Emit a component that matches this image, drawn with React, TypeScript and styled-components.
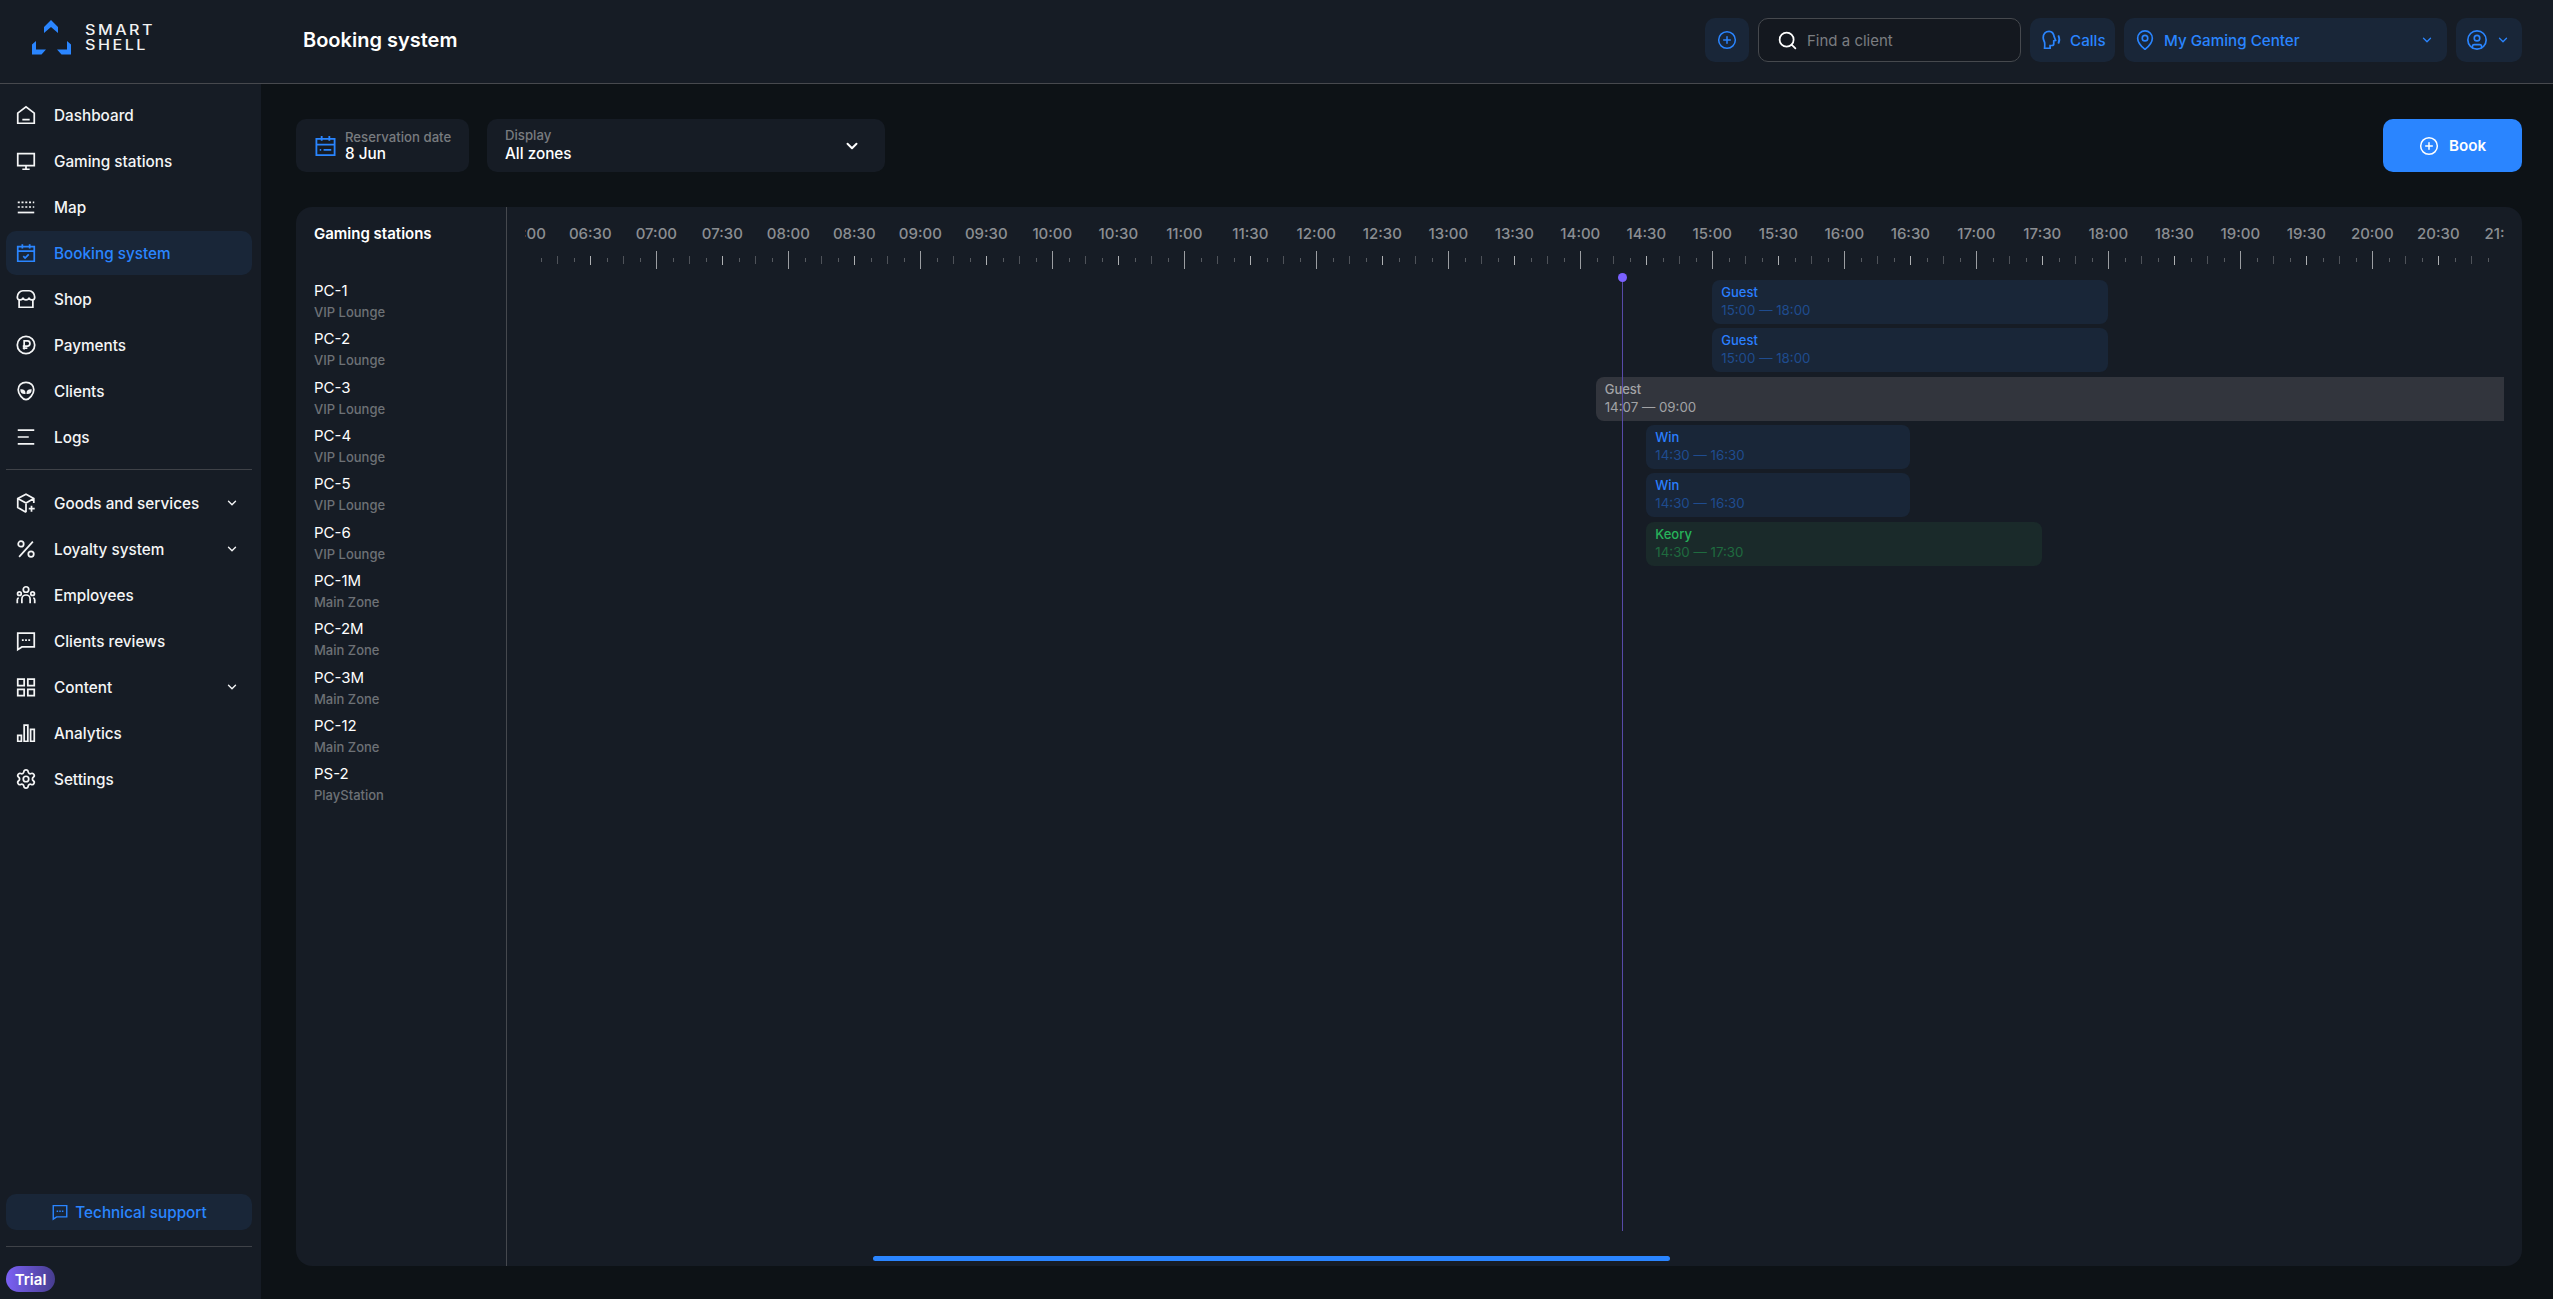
import React from 'react';
import styled, { createGlobalStyle } from 'styled-components';
import { ChevronDown, CirclePlus, CircleUser, MapPin, Search, Settings } from 'lucide-react';

const BLUE = '#2a85ff';
const HOUR_WIDTH = 132;
const FIRST_HOUR = 6;
const ORIGIN = -0.7;

const GlobalStyle = createGlobalStyle`
  html, body {
    margin: 0;
    padding: 0;
    background: #0d1216;
    overflow: hidden;
  }
  * {
    box-sizing: border-box;
  }
  body {
    font-family: Inter, "Noto Sans", sans-serif;
    color: #fff;
  }
`;

const Shell = styled.div`
  display: flex;
  flex-direction: column;
  width: 2553px;
  height: 1299px;
`;

const Header = styled.header`
  display: flex;
  align-items: center;
  flex: none;
  height: 84px;
  padding: 0 31px 3px 0;
  background: #161c25;
  border-bottom: 1px solid #47494e;
`;

const Logo = styled.div`
  display: flex;
  align-items: center;
  gap: 14px;
  width: 303px;
  padding: 0 0 6px 32px;
`;

const LogoText = styled.div`
  font-size: 14px;
  line-height: 15px;
  font-weight: 500;
  letter-spacing: 2.2px;
  color: #f2f2f2;
  transform: scaleX(1.15);
  transform-origin: left center;
`;

const PageTitle = styled.h1`
  flex: 1;
  margin: 0;
  font-size: 20px;
  font-weight: 600;
`;

const HeaderControls = styled.div`
  display: flex;
  gap: 9px;
`;

const SoftButton = styled.div<{ $width: number }>`
  display: flex;
  align-items: center;
  gap: 8px;
  width: ${(p) => p.$width}px;
  height: 44px;
  padding: 0 10px;
  border-radius: 10px;
  background: #192638;
  color: ${BLUE};
  font-size: 15.2px;
  font-weight: 500;
`;

const IconButton = styled(SoftButton)`
  justify-content: center;
  padding: 0;
`;

const Spacer = styled.span`
  flex: 1;
`;

const PinnedChevron = styled(ChevronDown)`
  margin-right: 3px;
`;

const SearchBox = styled.div`
  display: flex;
  align-items: center;
  gap: 9px;
  width: 263px;
  height: 44px;
  padding: 0 18px;
  border: 1px solid #46494e;
  border-radius: 10px;
  background: #14181f;
  color: #7b7d81;
  font-size: 15px;
`;

const Body = styled.div`
  display: flex;
  flex: 1;
  min-height: 0;
`;

const Sidebar = styled.aside`
  display: flex;
  flex-direction: column;
  flex: none;
  width: 261px;
  padding: 9px 9px 7px 6px;
  background: #161c25;
`;

const NavList = styled.nav`
  display: flex;
  flex-direction: column;
  gap: 2px;
`;

const NavItem = styled.a<{ $active?: boolean }>`
  display: flex;
  align-items: center;
  height: 44px;
  padding: 0 10px 0 9px;
  gap: 17px;
  border-radius: 10px;
  font-size: 15.3px;
  font-weight: 500;
  color: ${(p) => (p.$active ? BLUE : '#f4f5f6')};
  background: ${(p) => (p.$active ? '#192638' : 'transparent')};
`;

const NavDivider = styled.div`
  height: 1px;
  margin: 10px 0 11px;
  background: #3f4248;
`;

const FooterDivider = styled.div`
  height: 1px;
  margin-top: 16px;
  background: #3f4248;
`;

const SupportButton = styled.div`
  display: flex;
  align-items: center;
  justify-content: center;
  gap: 6px;
  height: 36px;
  margin-top: auto;
  border-radius: 10px;
  background: #192638;
  color: ${BLUE};
  font-size: 15.3px;
  font-weight: 500;
`;

const TrialBadge = styled.div`
  display: flex;
  align-items: center;
  justify-content: center;
  width: 49px;
  height: 26px;
  margin-top: 19px;
  border-radius: 13px;
  background: linear-gradient(90deg, #7b61f5, #473d8f);
  font-size: 15px;
  font-weight: 600;
`;

const Main = styled.main`
  display: flex;
  flex-direction: column;
  flex: 1;
  min-width: 0;
  padding: 35px 31px 33px 35px;
`;

const Toolbar = styled.div`
  display: flex;
  gap: 18px;
  flex: none;
  height: 53px;
  margin-bottom: 35px;
`;

const DateField = styled.div`
  display: flex;
  align-items: center;
  gap: 8px;
  width: 173px;
  padding-left: 18px;
  border-radius: 10px;
  background: #161c25;
`;

const SelectField = styled.div`
  display: flex;
  align-items: center;
  justify-content: space-between;
  width: 398px;
  padding: 0 24px 0 18px;
  border-radius: 10px;
  background: #161c25;
`;

const FieldLabel = styled.div`
  font-size: 13.2px;
  line-height: 15px;
  font-weight: 500;
  color: #787b7f;
`;

const FieldValue = styled.div`
  font-size: 15.3px;
  line-height: 17px;
  font-weight: 500;
  color: #fff;
`;

const SelectValue = styled(FieldValue)`
  margin-top: 2px;
`;

const SelectText = styled.div`
  margin-top: -1px;
`;

const BookButton = styled.div`
  display: flex;
  align-items: center;
  justify-content: center;
  gap: 10px;
  width: 139px;
  margin-left: auto;
  border-radius: 10px;
  background: ${BLUE};
  font-size: 15.2px;
  font-weight: 600;
`;

const Panel = styled.section`
  position: relative;
  display: grid;
  grid-template-columns: 211px 1fr;
  flex: 1;
  min-height: 0;
  overflow: hidden;
  border-radius: 16px;
  background: #161c25;
`;

const StationsColumn = styled.div`
  padding: 0 18px;
  border-right: 1px solid #45484e;
`;

const StationsTitle = styled.div`
  height: 73px;
  padding-top: 18px;
  font-size: 15px;
  line-height: 18px;
  font-weight: 600;
`;

const StationRow = styled.div`
  height: 48.33px;
`;

const StationName = styled.div`
  font-size: 15px;
  line-height: 22px;
  font-weight: 400;
`;

const StationZone = styled.div`
  font-size: 13px;
  line-height: 20px;
  font-weight: 500;
  color: #6d7176;
`;

const TimeColumn = styled.div`
  padding: 0 18px;
  min-width: 0;
`;

const TimeClip = styled.div`
  position: relative;
  height: 100%;
  overflow: hidden;
`;

const LabelsRow = styled.div`
  display: flex;
  height: 36px;
  padding-top: 18px;
  margin-left: ${ORIGIN - HOUR_WIDTH / 4}px;
`;

const TimeLabel = styled.div`
  flex: none;
  width: ${HOUR_WIDTH / 2}px;
  font-size: 15px;
  line-height: 18px;
  font-weight: 500;
  text-align: center;
  color: #8b8e92;
`;

const Ruler = styled.div`
  display: flex;
  align-items: center;
  height: 18px;
  margin-top: 8px;
  margin-bottom: 9px;
  margin-left: ${ORIGIN}px;
`;

const TickCell = styled.div`
  display: flex;
  align-items: center;
  flex: none;
  width: ${HOUR_WIDTH / 8}px;
`;

const Tick = styled.div<{ $kind: 'hour' | 'half' | 'quarter' | 'minor' }>`
  width: 1px;
  height: ${(p) => ({ hour: 18, half: 9, quarter: 8, minor: 4 })[p.$kind]}px;
  background: ${(p) => ({ hour: '#9b9ea2', half: '#aeb0b3', quarter: '#4e5259', minor: '#565a60' })[p.$kind]};
`;

const BookingRow = styled.div`
  position: relative;
  height: 48.33px;
`;

const tones = {
  blue: { bg: '#192638', name: '#2a7fff', time: '#1f4c8f' },
  grey: { bg: '#32353d', name: '#a2a3a6', time: '#a2a3a6' },
  green: { bg: '#1a2a2a', name: '#27b35a', time: '#1f6b3f' },
};

type Tone = keyof typeof tones;

const BookingBar = styled.div<{ $tone: Tone }>`
  position: absolute;
  top: 2px;
  height: 44px;
  padding: 4px 9px;
  border-radius: 8px;
  background: ${(p) => tones[p.$tone].bg};
  white-space: nowrap;
`;

const BookingName = styled.div<{ $tone: Tone }>`
  font-size: 13px;
  line-height: 17px;
  font-weight: 500;
  color: ${(p) => tones[p.$tone].name};
`;

const BookingTime = styled.div<{ $tone: Tone }>`
  font-size: 13.3px;
  line-height: 19px;
  color: ${(p) => tones[p.$tone].time};
`;

const NowLine = styled.div`
  position: absolute;
  top: 70px;
  width: 1px;
  height: 954px;
  background: #574aa8;

  &::before {
    content: '';
    position: absolute;
    top: -4px;
    left: -4px;
    width: 9px;
    height: 9px;
    border-radius: 50%;
    background: #7b61ff;
  }
`;

const ScrollThumb = styled.div`
  position: absolute;
  left: 577px;
  bottom: 5px;
  width: 797px;
  height: 5px;
  border-radius: 3px;
  background: ${BLUE};
`;

const NavSvg = styled.svg<{ $size?: number; $color?: string }>`
  flex: none;
  width: ${(p) => p.$size ?? 22}px;
  height: ${(p) => p.$size ?? 22}px;
  fill: none;
  stroke: ${(p) => p.$color ?? 'currentColor'};
  stroke-width: 1.9;
`;

const GearIcon = styled(Settings)`
  flex: none;
`;

const Chevron = styled(ChevronDown)`
  flex: none;
  margin-left: auto;
  margin-right: 3px;
`;

const LogoMark = () => (
  <svg width="39" height="35" viewBox="32 19 39 35" fill={BLUE}>
    <path d="M44 26l7-7 7 7v6l-7-6-7 6z" />
    <path d="M32 43.5l4-3.5v8.5h10l-4.5 5H32z" />
    <path d="M71 43.5L67 40v8.5H57l4.5 5H71z" />
  </svg>
);

const icons: Record<string, React.ReactNode> = {
  dashboard: <path d="M3 10l9-7 9 7v11H3zM8 17h8" />,
  monitor: <path d="M3 4h18v13H3zM12 17v4M8 21h8" />,
  map: (
    <>
      <path d="M3 7h18M3 12h18" strokeDasharray="2.2 1.9" />
      <path d="M3 18h18" />
    </>
  ),
  booking: <path d="M3 5h18v16H3zM3 10h18M8 2.5V7M16 2.5V7M9 15.5l2 2 4-4" />,
  shop: (
    <path d="M2.5 10c0-4 3-7 6-7h7c3 0 6 3 6 7 0 2-1.5 3-3 3s-3-1-3.2-2.5C15 12 13.5 13 12 13s-3-1-3.3-2.5C8.5 12 7 13 5.5 13s-3-1-3-3zM4.5 13v8h15v-8" />
  ),
  payments: (
    <>
      <circle cx="12" cy="12" r="9.5" />
      <path d="M10 17V7.5h3.5a2.8 2.8 0 0 1 0 5.6H8.5M8.5 15.5h5" />
    </>
  ),
  clients: (
    <path d="M12 2.5c-5 0-8.5 3.5-8.5 8 0 5 5 11 8.5 11s8.5-6 8.5-11c0-4.5-3.5-8-8.5-8zM6.8 11c2.4 0 3.7 1.3 3.7 3.3-2.4 0-3.7-1.3-3.7-3.3zM17.2 11c-2.4 0-3.7 1.3-3.7 3.3 2.4 0 3.7-1.3 3.7-3.3z" />
  ),
  logs: <path d="M3 4.5h18M3 12h12M3 19.5h18" />,
  goods: <path d="M20.5 12V7L12 2.5 3 7v10l9 5M3 7l9 5 8.5-5M12 12v10M18 15v6.5M15 18.2h6.5" />,
  loyalty: (
    <>
      <circle cx="6.5" cy="6.5" r="3" />
      <circle cx="17.5" cy="17.5" r="3" />
      <path d="M19.5 4L4.5 20.5" />
    </>
  ),
  employees: (
    <>
      <circle cx="12" cy="6" r="3" />
      <circle cx="4.8" cy="10.5" r="2" />
      <circle cx="19.2" cy="10.5" r="2" />
      <path d="M7.5 21v-4.5a4.5 4.5 0 0 1 9 0V21M2.5 21v-3.5c0-1.2.5-2 1.5-2.5M21.5 21v-3.5c0-1.2-.5-2-1.5-2.5" />
    </>
  ),
  reviews: (
    <>
      <path d="M3 3.5h18v15H7.5L3 21.5z" />
      <path d="M7.5 11h9" strokeDasharray="2 1.5" />
    </>
  ),
  content: <path d="M3 3.5h7v7H3zM14 3.5h7v7h-7zM3 14.5h7v7H3zM14 14.5h7v7h-7z" />,
  analytics: <path d="M3 14.5h4V21H3zM10 3.5h4V21h-4zM17 8h4v13h-4z" />,
};

const NavIcon = ({ name }: { name: string }) =>
  name === 'settings' ? (
    <GearIcon size={22} strokeWidth={1.9} />
  ) : (
    <NavSvg viewBox="0 0 24 24">{icons[name]}</NavSvg>
  );

const primaryNav = [
  { icon: 'dashboard', label: 'Dashboard' },
  { icon: 'monitor', label: 'Gaming stations' },
  { icon: 'map', label: 'Map' },
  { icon: 'booking', label: 'Booking system', active: true },
  { icon: 'shop', label: 'Shop' },
  { icon: 'payments', label: 'Payments' },
  { icon: 'clients', label: 'Clients' },
  { icon: 'logs', label: 'Logs' },
];

const secondaryNav = [
  { icon: 'goods', label: 'Goods and services', more: true },
  { icon: 'loyalty', label: 'Loyalty system', more: true },
  { icon: 'employees', label: 'Employees' },
  { icon: 'reviews', label: 'Clients reviews' },
  { icon: 'content', label: 'Content', more: true },
  { icon: 'analytics', label: 'Analytics' },
  { icon: 'settings', label: 'Settings' },
];

const stations = [
  ['PC-1', 'VIP Lounge'],
  ['PC-2', 'VIP Lounge'],
  ['PC-3', 'VIP Lounge'],
  ['PC-4', 'VIP Lounge'],
  ['PC-5', 'VIP Lounge'],
  ['PC-6', 'VIP Lounge'],
  ['PC-1M', 'Main Zone'],
  ['PC-2M', 'Main Zone'],
  ['PC-3M', 'Main Zone'],
  ['PC-12', 'Main Zone'],
  ['PS-2', 'PlayStation'],
];

type Booking = { name: string; from: number; to: number; time: string; tone: Tone };

const bookings: Booking[] = [
  { name: 'Guest', from: 15, to: 18, time: '15:00 — 18:00', tone: 'blue' },
  { name: 'Guest', from: 15, to: 18, time: '15:00 — 18:00', tone: 'blue' },
  { name: 'Guest', from: 14 + 7 / 60, to: 33, time: '14:07 — 09:00', tone: 'grey' },
  { name: 'Win', from: 14.5, to: 16.5, time: '14:30 — 16:30', tone: 'blue' },
  { name: 'Win', from: 14.5, to: 16.5, time: '14:30 — 16:30', tone: 'blue' },
  { name: 'Keory', from: 14.5, to: 17.5, time: '14:30 — 17:30', tone: 'green' },
];

const hourToX = (hour: number) => ORIGIN + (hour - FIRST_HOUR) * HOUR_WIDTH;

const timeLabels = Array.from({ length: 32 }, (_, i) => {
  const hour = FIRST_HOUR + Math.floor(i / 2);
  return `${String(hour).padStart(2, '0')}:${i % 2 ? '30' : '00'}`;
});

const tickKind = (i: number) => {
  if (i % 8 === 0) return 'hour';
  if (i % 4 === 0) return 'half';
  return i % 2 === 0 ? 'quarter' : 'minor';
};

const App: React.FC = () => (
  <Shell>
    <GlobalStyle />
    <Header>
      <Logo>
        <LogoMark />
        <LogoText>
          SMART
          <br />
          SHELL
        </LogoText>
      </Logo>
      <PageTitle>Booking system</PageTitle>
      <HeaderControls>
        <IconButton $width={44}>
          <CirclePlus size={20} strokeWidth={1.8} />
        </IconButton>
        <SearchBox>
          <Search size={21} color="#fff" strokeWidth={2} />
          Find a client
        </SearchBox>
        <SoftButton $width={85}>
          <NavSvg $size={22} viewBox="0 0 24 24">
            <path d="M10 2.5C6 2.5 3.5 5.5 3.5 9.5c0 2 1 3.5 1.5 5 .4 1.5.2 4 0 6.5h6v-3h2c1.5 0 2-.8 2-2v-3l2-.5-1.5-4C15 5.5 13.5 2.5 10 2.5zM20 7c1.5 3 1.5 6 0 9" />
          </NavSvg>
          Calls
        </SoftButton>
        <SoftButton $width={323}>
          <MapPin size={22} strokeWidth={1.8} />
          My Gaming Center
          <Spacer />
          <PinnedChevron size={14} strokeWidth={2.2} />
        </SoftButton>
        <SoftButton $width={66}>
          <CircleUser size={22} strokeWidth={1.8} />
          <ChevronDown size={14} strokeWidth={2.2} />
        </SoftButton>
      </HeaderControls>
    </Header>
    <Body>
      <Sidebar>
        <NavList>
          {primaryNav.map((item) => (
            <NavItem key={item.label} $active={item.active}>
              <NavIcon name={item.icon} />
              {item.label}
            </NavItem>
          ))}
        </NavList>
        <NavDivider />
        <NavList>
          {secondaryNav.map((item) => (
            <NavItem key={item.label}>
              <NavIcon name={item.icon} />
              {item.label}
              {item.more && <Chevron size={14} strokeWidth={2.4} />}
            </NavItem>
          ))}
        </NavList>
        <SupportButton>
          <NavSvg $size={18} viewBox="0 0 24 24">
            {icons.reviews}
          </NavSvg>
          Technical support
        </SupportButton>
        <FooterDivider />
        <TrialBadge>Trial</TrialBadge>
      </Sidebar>
      <Main>
        <Toolbar>
          <DateField>
            <NavSvg $size={23} $color={BLUE} viewBox="0 0 24 24">
              <path d="M2.5 5h19v17h-19zM2.5 11h19M8 2v5M16 2v5M10 16.5h8M6 16.5h1.5" />
            </NavSvg>
            <div>
              <FieldLabel>Reservation date</FieldLabel>
              <FieldValue>8 Jun</FieldValue>
            </div>
          </DateField>
          <SelectField>
            <SelectText>
              <FieldLabel>Display</FieldLabel>
              <SelectValue>All zones</SelectValue>
            </SelectText>
            <ChevronDown size={18} strokeWidth={2.6} />
          </SelectField>
          <BookButton>
            <CirclePlus size={20} strokeWidth={1.8} />
            Book
          </BookButton>
        </Toolbar>
        <Panel>
          <StationsColumn>
            <StationsTitle>Gaming stations</StationsTitle>
            {stations.map(([name, zone]) => (
              <StationRow key={name}>
                <StationName>{name}</StationName>
                <StationZone>{zone}</StationZone>
              </StationRow>
            ))}
          </StationsColumn>
          <TimeColumn>
            <TimeClip>
              <LabelsRow>
                {timeLabels.map((label) => (
                  <TimeLabel key={label}>{label}</TimeLabel>
                ))}
              </LabelsRow>
              <Ruler>
                {Array.from({ length: 124 }, (_, i) => (
                  <TickCell key={i}>
                    <Tick $kind={tickKind(i)} />
                  </TickCell>
                ))}
              </Ruler>
              {bookings.map((booking, i) => (
                <BookingRow key={i}>
                  <BookingBar
                    $tone={booking.tone}
                    style={{
                      left: hourToX(booking.from),
                      width: (booking.to - booking.from) * HOUR_WIDTH - 0.5,
                    }}
                  >
                    <BookingName $tone={booking.tone}>{booking.name}</BookingName>
                    <BookingTime $tone={booking.tone}>{booking.time}</BookingTime>
                  </BookingBar>
                </BookingRow>
              ))}
              <NowLine style={{ left: hourToX(14 + 18.8 / 60) }} />
            </TimeClip>
          </TimeColumn>
          <ScrollThumb />
        </Panel>
      </Main>
    </Body>
  </Shell>
);

export default App;
